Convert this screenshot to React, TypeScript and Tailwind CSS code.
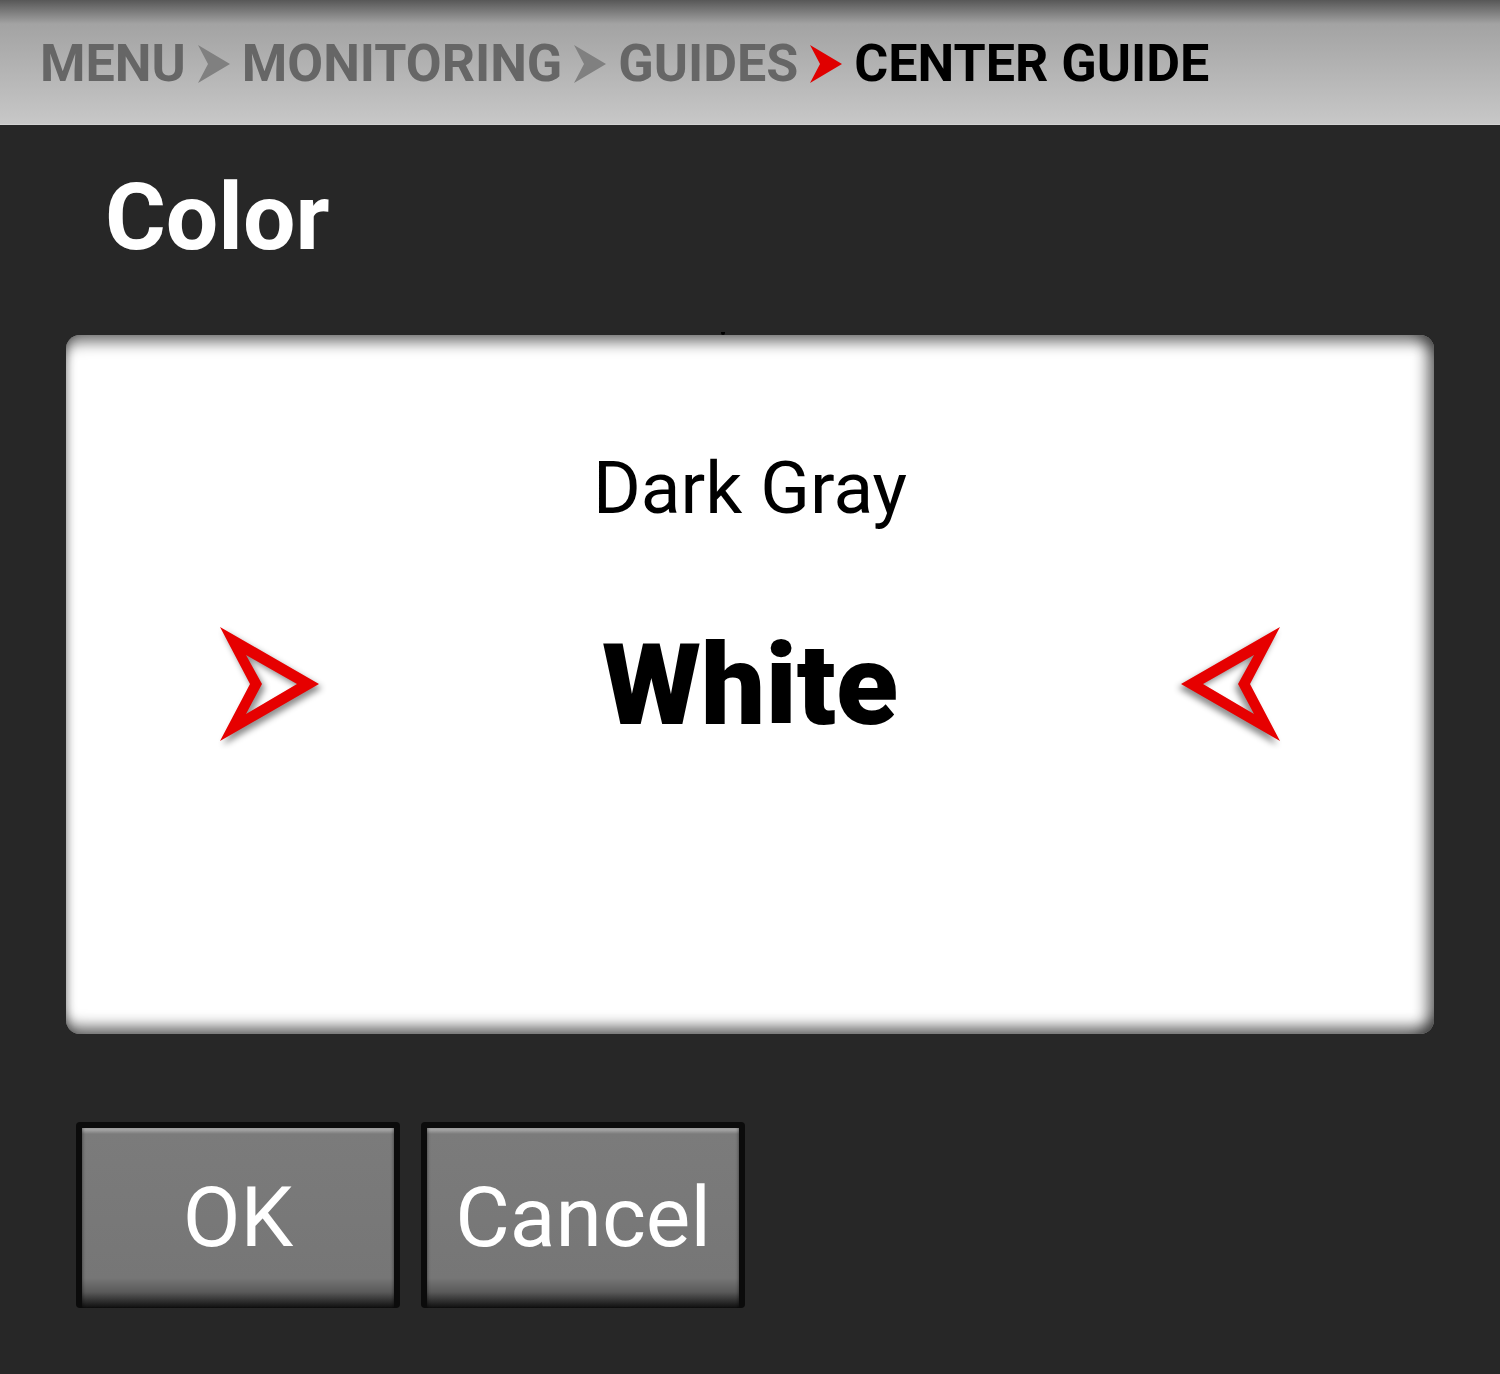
const crumbs = ["MENU", "MONITORING", "GUIDES"];

const Chevron = ({ color }: { color: string }) => (
  <svg width="32" height="38" viewBox="0 0 32 38" className="shrink-0">
    <path d="M0 0 L32 19 L0 38 L10 19 Z" fill={color} />
  </svg>
);

const Arrow = ({ flip }: { flip?: boolean }) => (
  <svg
    width="100"
    height="116"
    viewBox="0 0 100 116"
    className={`shrink-0 drop-shadow-[3px_4px_3px_rgba(0,0,0,0.45)] ${flip ? "-scale-x-100" : ""}`}
  >
    <path
      fillRule="evenodd"
      d="M0 0 L99 57 L0 114 L30 57 Z M26 28 L77 57 L26 87 L42 57 Z"
      fill="#e60000"
    />
  </svg>
);

const Button = ({ label }: { label: string }) => (
  <div className="w-[324px] h-[186px] bg-[#0b0b0b] rounded-[4px] px-[6px] pt-[6px]">
    <div className="h-full flex items-center justify-center bg-[linear-gradient(to_bottom,#a2a2a2_0px,#a2a2a2_2px,#7b7b7b_6px,#767676_150px,#5a5a5a_164px,#0e0e0e_180px)] shadow-[inset_3px_0_3px_-2px_rgba(0,0,0,0.35),inset_-3px_0_3px_-2px_rgba(0,0,0,0.35)]">
      <span className="text-white text-[84px] leading-none font-normal">{label}</span>
    </div>
  </div>
);

export default function App() {
  return (
    <div className="w-[1500px] h-[1374px] bg-[#272727] font-['Roboto',sans-serif] flex flex-col">
      <div className="h-[125px] pt-[3px] border-b border-[#d2d2d2] bg-[linear-gradient(to_bottom,#575757_0px,#a3a3a3_24px,#c7c7c7_123px)] flex items-center pl-[40px] gap-[12px]">
        {crumbs.map((c) => (
          <div key={c} className="flex items-center gap-[12px]">
            <span className="text-[52px] leading-none font-bold text-[#666666]">{c}</span>
            <Chevron color={c === "GUIDES" ? "#e00000" : "#808080"} />
          </div>
        ))}
        <span className="text-[52px] leading-none font-bold text-black">CENTER GUIDE</span>
      </div>

      <h1 className="mt-[46px] ml-[105px] text-[93px] leading-none font-bold text-white">Color</h1>

      <div className="relative mt-[71px] mx-[66px] h-[699px] bg-white rounded-[14px] shadow-[inset_0_16px_14px_-8px_rgba(0,0,0,0.5),inset_-16px_0_14px_-8px_rgba(0,0,0,0.5),inset_0_-16px_14px_-8px_rgba(0,0,0,0.55),inset_10px_0_10px_-8px_rgba(0,0,0,0.3)] flex flex-col items-center pt-[117px]">
        <div className="absolute -top-[3px] left-[655px] w-[4px] h-[3px] bg-black rounded-b-full" />
        <div className="text-[73px] leading-none text-black">Dark Gray</div>
        <div className="mt-[102px] w-full px-[154px] flex items-center justify-between">
          <Arrow />
          <span className="text-[114px] leading-none font-black text-black">White</span>
          <Arrow flip />
        </div>
      </div>

      <div className="mt-[88px] ml-[76px] flex gap-[21px]">
        <Button label="OK" />
        <Button label="Cancel" />
      </div>
    </div>
  );
}
